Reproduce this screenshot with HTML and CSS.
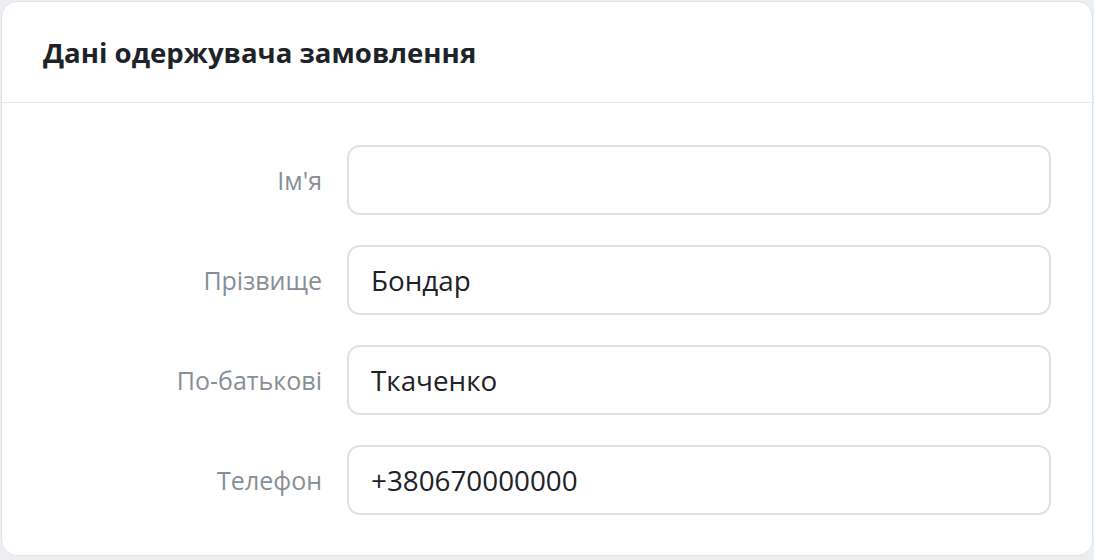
FILE: index.html
```html
<!DOCTYPE html>
<html lang="uk">
<head>
<meta charset="utf-8">
<link rel="stylesheet" href="styles.css">
</head>
<body>
<div class="card">
  <div class="card-header">
    <h2 class="card-title">Дані одержувача замовлення</h2>
  </div>
  <form class="form">
    <label class="row">
      <span class="label">Ім'я</span>
      <input class="input" type="text" value="">
    </label>
    <label class="row">
      <span class="label">Прізвище</span>
      <input class="input" type="text" value="Бондар">
    </label>
    <label class="row">
      <span class="label">По-батькові</span>
      <input class="input" type="text" value="Ткаченко">
    </label>
    <label class="row">
      <span class="label">Телефон</span>
      <input class="input" type="text" value="+380670000000">
    </label>
  </form>
</div>
</body>
</html>
```
FILE: styles.css
```css
html, body {
  margin: 0;
  height: 100%;
}
body {
  background: #eceef1;
  padding: 1px;
  box-sizing: border-box;
  font-family: "Open Sans", "Noto Sans", sans-serif;
}
.card {
  background: #fff;
  border: 1px solid #e1e4e8;
  border-radius: 16px;
  overflow: hidden;
}
.card-header {
  height: 100px;
  border-bottom: 1px solid #e7e9ec;
  display: flex;
  align-items: center;
  padding-left: 41px;
}
.card-title {
  margin: 0;
  font-size: 27.6px;
  font-weight: 700;
  color: #1e2329;
}
.form {
  padding: 42px 41px 40px 0;
  display: flex;
  flex-direction: column;
  gap: 30px;
}
.row {
  display: grid;
  grid-template-columns: 320px 1fr;
  column-gap: 25px;
  align-items: center;
}
.label {
  text-align: right;
  font-size: 25px;
  color: #878e97;
}
.input {
  height: 70px;
  box-sizing: border-box;
  border: 2px solid #dde1e6;
  border-radius: 13px;
  padding: 0 22px;
  font-family: inherit;
  font-size: 27.8px;
  color: #1c2228;
  background: #fff;
  outline: none;
}
```
